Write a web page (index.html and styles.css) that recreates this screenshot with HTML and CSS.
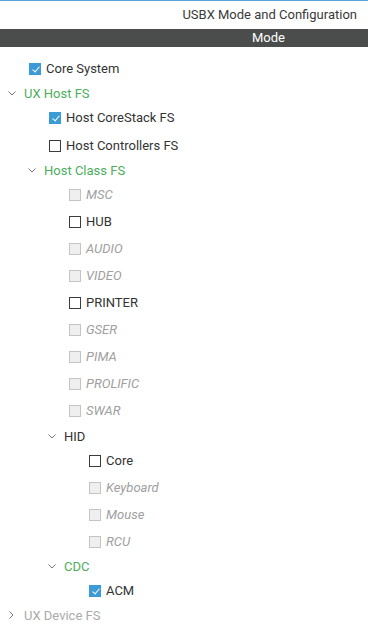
FILE: index.html
```html
<!DOCTYPE html>
<html>
<head>
<meta charset="utf-8">
<link rel="stylesheet" href="styles.css">
</head>
<body>
<div class="panel">
  <div class="title">USBX Mode and Configuration</div>
  <div class="bar"><span>Mode</span></div>
  <div class="tree">
    <div class="row leaf l0"><span class="cb on"></span><span class="lbl">Core System</span></div>
    <div class="row node l0"><svg class="chev" viewBox="0 0 8 5"><polyline points="0.5,0.5 4,4 7.5,0.5"/></svg><span class="lbl green">UX Host FS</span></div>
    <div class="row leaf l1"><span class="cb on"></span><span class="lbl">Host CoreStack FS</span></div>
    <div class="row leaf l1 extra"><span class="cb"></span><span class="lbl">Host Controllers FS</span></div>
    <div class="row node l1"><svg class="chev" viewBox="0 0 8 5"><polyline points="0.5,0.5 4,4 7.5,0.5"/></svg><span class="lbl green">Host Class FS</span></div>
    <div class="row leaf l2 dis"><span class="cb"></span><span class="lbl">MSC</span></div>
    <div class="row leaf l2"><span class="cb"></span><span class="lbl">HUB</span></div>
    <div class="row leaf l2 dis"><span class="cb"></span><span class="lbl">AUDIO</span></div>
    <div class="row leaf l2 dis"><span class="cb"></span><span class="lbl">VIDEO</span></div>
    <div class="row leaf l2"><span class="cb"></span><span class="lbl">PRINTER</span></div>
    <div class="row leaf l2 dis"><span class="cb"></span><span class="lbl">GSER</span></div>
    <div class="row leaf l2 dis"><span class="cb"></span><span class="lbl">PIMA</span></div>
    <div class="row leaf l2 dis"><span class="cb"></span><span class="lbl">PROLIFIC</span></div>
    <div class="row leaf l2 dis"><span class="cb"></span><span class="lbl">SWAR</span></div>
    <div class="row node l2 tall"><svg class="chev" viewBox="0 0 8 5"><polyline points="0.5,0.5 4,4 7.5,0.5"/></svg><span class="lbl">HID</span></div>
    <div class="row leaf l3"><span class="cb"></span><span class="lbl">Core</span></div>
    <div class="row leaf l3 dis"><span class="cb"></span><span class="lbl">Keyboard</span></div>
    <div class="row leaf l3 dis"><span class="cb"></span><span class="lbl">Mouse</span></div>
    <div class="row leaf l3 dis"><span class="cb"></span><span class="lbl">RCU</span></div>
    <div class="row node l2"><svg class="chev" viewBox="0 0 8 5"><polyline points="0.5,0.5 4,4 7.5,0.5"/></svg><span class="lbl green">CDC</span></div>
    <div class="row leaf l3"><span class="cb on"></span><span class="lbl">ACM</span></div>
    <div class="row node l0 closed"><svg class="chev right" viewBox="0 0 5 8"><polyline points="0.5,0.5 4,4 0.5,7.5"/></svg><span class="lbl grey">UX Device FS</span></div>
  </div>
</div>
</body>
</html>
```

FILE: styles.css
```css
* { box-sizing: border-box; }
html, body { margin: 0; padding: 0; background: #fff; }
body {
  font-family: Roboto, "Liberation Sans", Arial, sans-serif;
  font-size: 13px;
  color: #333;
  width: 368px;
  height: 636px;
  overflow: hidden;
}
.panel { border-top: 1px solid #5aa5d8; }
.title {
  height: 28px;
  line-height: 28px;
  text-align: right;
  padding-right: 11px;
  color: #3a3a3a;
}
.bar {
  height: 18px;
  background: #4b4c4c;
  color: #fff;
  line-height: 18px;
  padding-left: 252px;
}
.tree { padding-top: 8px; }
.row {
  display: flex;
  align-items: center;
  white-space: nowrap;
}
.leaf { height: 27px; }
.node { height: 22px; }
.extra { height: 28px; padding-top: 1px; }
.tall { height: 23px; padding-top: 2px; }
.l0 { padding-left: 8px; }
.l1 { padding-left: 28px; }
.l2 { padding-left: 48px; }
.l3 { padding-left: 68px; }
.leaf .cb { margin-left: 21px; }
.cb {
  width: 12px;
  height: 12px;
  border: 1px solid #3c3c3c;
  background: #fff;
  flex: none;
  position: relative;
}
.cb.on { background: #3c9bd6; border-color: #3c9bd6; }
.cb.on::after {
  content: "";
  position: absolute;
  left: 3.5px;
  top: 1px;
  width: 3px;
  height: 6px;
  border-right: 1.6px solid #fff;
  border-bottom: 1.6px solid #fff;
  transform: rotate(40deg);
}
.dis .cb { border-color: #c4c4c4; background: #efefef; }
.lbl { margin-left: 5px; }
.node .lbl { margin-left: 8px; }
.dis .lbl { color: #a0a0a0; font-style: italic; }
.green { color: #4cae5c; }
.grey { color: #aaa; }
.chev {
  width: 8px;
  height: 5px;
  flex: none;
  fill: none;
  stroke: #777;
  stroke-width: 1;
}
.chev.right { width: 5px; height: 8px; margin-left: 1px; margin-right: 2px; }
```
